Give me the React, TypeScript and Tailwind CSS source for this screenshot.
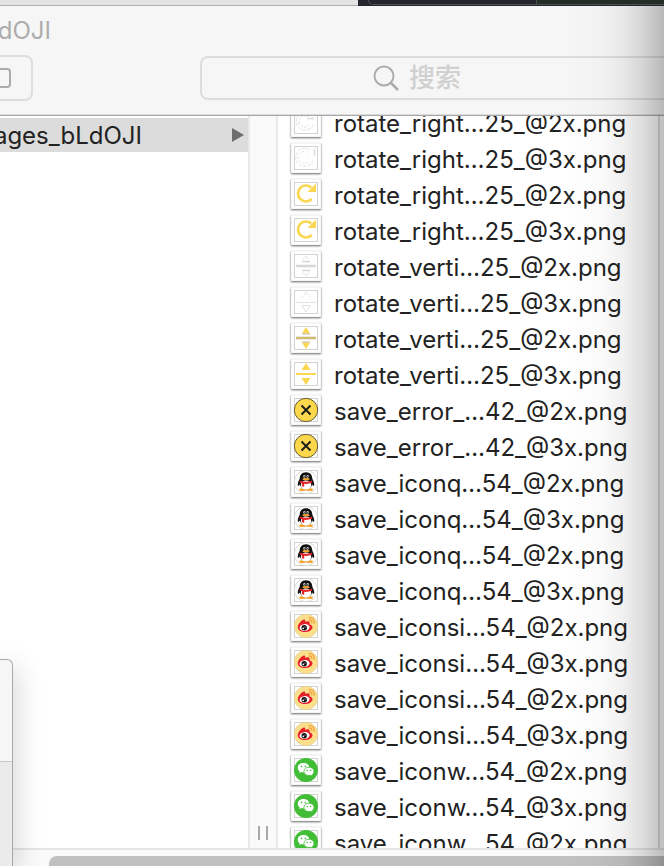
import React from "react";

type Kind =
  | "rotateFaint"
  | "rotateDots"
  | "rotate"
  | "flipGray"
  | "flipFaint"
  | "flipShaded"
  | "flip"
  | "error"
  | "qq"
  | "weibo"
  | "wechat";

const files: { name: string; kind: Kind }[] = [
  { name: "rotate_right…25_@2x.png", kind: "rotateFaint" },
  { name: "rotate_right…25_@3x.png", kind: "rotateDots" },
  { name: "rotate_right…25_@2x.png", kind: "rotate" },
  { name: "rotate_right…25_@3x.png", kind: "rotate" },
  { name: "rotate_verti…25_@2x.png", kind: "flipGray" },
  { name: "rotate_verti…25_@3x.png", kind: "flipFaint" },
  { name: "rotate_verti…25_@2x.png", kind: "flipShaded" },
  { name: "rotate_verti…25_@3x.png", kind: "flip" },
  { name: "save_error_…42_@2x.png", kind: "error" },
  { name: "save_error_…42_@3x.png", kind: "error" },
  { name: "save_iconq…54_@2x.png", kind: "qq" },
  { name: "save_iconq…54_@3x.png", kind: "qq" },
  { name: "save_iconq…54_@2x.png", kind: "qq" },
  { name: "save_iconq…54_@3x.png", kind: "qq" },
  { name: "save_iconsi…54_@2x.png", kind: "weibo" },
  { name: "save_iconsi…54_@3x.png", kind: "weibo" },
  { name: "save_iconsi…54_@2x.png", kind: "weibo" },
  { name: "save_iconsi…54_@3x.png", kind: "weibo" },
  { name: "save_iconw…54_@2x.png", kind: "wechat" },
  { name: "save_iconw…54_@3x.png", kind: "wechat" },
  { name: "save_iconw…54_@2x.png", kind: "wechat" },
];

function Glyph({ kind }: { kind: Kind }) {
  switch (kind) {
    case "rotateFaint":
      return (
        <g fill="none" stroke="#e2e2e2">
          <path d="M19 7A8.800 8.800 0 1 0 22 18" strokeDasharray="4 1" />
          <path d="M17 9.500A5.800 5.800 0 1 0 18 18.500" strokeDasharray="3 1" />
          <path d="M16 11.500h7" strokeWidth="2" />
        </g>
      );
    case "rotateDots":
      return (
        <g fill="none" stroke="#e2e2e2">
          <path d="M18.500 6.500A9 9 0 1 0 22 18" strokeDasharray="3 1.500" />
          <path d="M17 9.500A6 6 0 1 0 18 18.500" strokeDasharray="2 2" />
          <path d="M23.500 5.500v7" strokeWidth="2" />
        </g>
      );
    case "rotate":
      return (
        <g>
          <path d="M20.300 8.500A8 8 0 1 0 20.800 20" fill="none" stroke="#fbd650" strokeWidth="2.700" />
          <path d="M16.500 13h8.500v-8.500z" fill="#fbd650" />
        </g>
      );
    case "flipGray":
      return (
        <g fill="none" stroke="#d6d6d6">
          <path d="M5 15h20" strokeWidth="2.500" />
          <path d="M11 10.500h8M11 19.500h8" strokeWidth="1.500" />
          <path d="M12 8.500l3-3.500 3 3.500M12 21.500l3 3.500 3-3.500" strokeDasharray="2 1" />
        </g>
      );
    case "flipFaint":
      return (
        <g fill="none" stroke="#e0e0e0">
          <path d="M5 14.500q0 1 1 1h18q1 0 1-1" />
          <path d="M11 10.500l4-5.500 4 5.500" strokeDasharray="2 1" />
          <path d="M11 18.500h8l-4 6.500z" />
        </g>
      );
    case "flipShaded":
      return (
        <g>
          <path d="M15 4l4 6.500h-8zM15 26l4-6.500h-8z" fill="#fbd650" />
          <path d="M11 11h8M11 19h8" stroke="#b9b5a8" />
          <path d="M5 15h20" stroke="#bdb089" strokeWidth="2.600" />
          <path d="M5 15h20" stroke="#e6c654" strokeWidth="1" />
        </g>
      );
    case "flip":
      return (
        <g fill="#fbd650">
          <path d="M15 4l4.500 7h-9zM15 26l4.500-7h-9zM5 14h20v2H5z" />
        </g>
      );
    case "error":
      return (
        <g>
          <circle cx="15" cy="15" r="11.700" fill="#fcd64d" stroke="#55502f" strokeWidth=".9" />
          <path d="M10.500 10.500l9 9M19.500 10.500l-9 9" stroke="#191919" strokeWidth="1.800" />
        </g>
      );
    case "qq":
      return (
        <g>
          <circle cx="15" cy="15" r="11.700" fill="#fff" stroke="#ccc" strokeWidth=".7" />
          <ellipse cx="11.500" cy="22.700" rx="3.500" ry="1.400" fill="#f3a52c" />
          <ellipse cx="18.500" cy="22.700" rx="3.500" ry="1.400" fill="#f3a52c" />
          <path d="M15 5.300c-4.200 0-6.300 2.900-6.300 6.400-1 1.900-2.300 4.700-1.900 6.700.5 1 1.500-.2 2-1 .8 3.200 3.200 4.800 6.200 4.800s5.400-1.600 6.200-4.800c.5.800 1.500 2 2 1 .4-2-.9-4.800-1.900-6.700 0-3.500-2.100-6.400-6.300-6.400z" fill="#111" />
          <ellipse cx="15" cy="18" rx="5.200" ry="4.600" fill="#fff" />
          <ellipse cx="13.400" cy="9.400" rx="1.100" ry="1.400" fill="#d8d8d8" />
          <ellipse cx="16.600" cy="9.400" rx="1.100" ry="1.400" fill="#d8d8d8" />
          <circle cx="13.700" cy="9.600" r=".5" fill="#111" />
          <circle cx="16.300" cy="9.600" r=".5" fill="#111" />
          <ellipse cx="15" cy="12.200" rx="3.500" ry="1.100" fill="#f3a52c" />
          <path d="M8.800 13.500q6.200 2.400 12.400 0v2q-4 1.700-8 1.300v2.900l-2.300-.4.100-3-2.200-.8z" fill="#e32126" />
        </g>
      );
    case "weibo":
      return (
        <g>
          <circle cx="15" cy="15" r="11.700" fill="#fbdf8b" stroke="#dcc98f" strokeWidth=".6" />
          <path d="M13 8.500c1.500-.2 1.400 1.200 1.100 2.300 2-.9 4.900-1.200 4.600 1.500 0 .5-.3.900.3 1.100 1.400.4 2.500 1.200 2.500 2.800 0 3-4 4.900-7.700 4.900-4 0-7-1.800-7-4.800 0-3.100 3.700-7.400 6.200-7.800z" fill="#e6202b" />
          <ellipse cx="13.600" cy="16.500" rx="5" ry="3.400" fill="#fff" transform="rotate(-8 13.600 16.500)" />
          <circle cx="13.200" cy="16.700" r="2.700" fill="#111" />
          <circle cx="12.300" cy="17.300" r=".9" fill="#fff" />
          <circle cx="14" cy="16" r=".5" fill="#fff" />
          <path d="M18 6.700c3.600-.5 6 2.500 5 5.800M18.400 9c1.800-.2 2.900 1.200 2.400 2.900" fill="none" stroke="#f5a142" strokeWidth="1.300" strokeLinecap="round" />
        </g>
      );
    default:
      return (
        <g>
          <circle cx="15" cy="15" r="12" fill="#42be36" />
          <path d="M12.500 8c-3.300 0-5.800 2-5.800 4.700 0 1.500.8 2.800 2.100 3.700l-.6 1.800 2.200-1.100c.7.200 1.400.3 2.100.3 3.200 0 5.800-2.100 5.800-4.700S15.700 8 12.500 8z" fill="#fff" />
          <path d="M18 12.200c-2.900 0-5.100 1.900-5.100 4.200s2.200 4.200 5.100 4.200c.6 0 1.200-.1 1.700-.3l1.900 1-.5-1.600c1.200-.8 1.900-1.900 1.900-3.300 0-2.300-2.200-4.200-5-4.200z" fill="#fff" stroke="#42be36" strokeWidth=".8" />
          <circle cx="10.500" cy="11.400" r=".8" fill="#42be36" />
          <circle cx="14.400" cy="11.400" r=".8" fill="#42be36" />
          <circle cx="16.300" cy="15.500" r=".7" fill="#42be36" />
          <circle cx="19.600" cy="15.500" r=".7" fill="#42be36" />
        </g>
      );
  }
}

function Thumb({ kind }: { kind: Kind }) {
  return (
    <svg
      viewBox="0 0 30 30"
      className="size-[30px] shrink-0 bg-white shadow-[inset_0_0_1px_rgba(0,0,0,0.35),0_1px_2px_rgba(0,0,0,0.6)]"
      aria-hidden="true"
    >
      <rect x="3.500" y="3.500" width="23" height="23" fill="none" stroke="#d2d2d2" strokeWidth="1" />
      <Glyph kind={kind} />
    </svg>
  );
}

export default function App() {
  return (
    <div className="relative flex h-screen flex-col overflow-hidden bg-white font-['Inter','Noto_Sans_CJK_SC',sans-serif] text-[24px] leading-[36px] text-[#222222]">
      <div className="flex h-[6px] shrink-0">
        <div className="w-[358px] shrink-0 border-b border-[#adadad] bg-[#e3e3e3]" />
        <div className="flex flex-1 bg-[#24262d] pl-[10px]">
          <div className="h-[5px] w-[168px] rounded-bl-md border-b border-l border-[#50535a]" />
          <div className="h-[5px] flex-1 border-b border-l border-[#4b524e] bg-[#252d29]" />
        </div>
      </div>

      <header className="h-[110px] shrink-0 border-b border-[#a8a8a8] bg-[#f6f6f6] shadow-[inset_0_-1px_0_#dcdcdc]">
        <div className="flex h-[49px] w-[51px] items-center justify-end">
          <h1 className="text-[#acacac]">dOJI</h1>
        </div>
        <div className="flex items-center justify-between">
          <button
            type="button"
            aria-label="View"
            className="flex h-[46px] w-[33px] items-center rounded-r-lg border-2 border-l-0 border-[#dddddd]"
          >
            <span className="h-[20px] w-[11px] rounded-r border-2 border-l-0 border-[#acacac]" />
          </button>
          <label className="ml-[167px] flex h-[44px] flex-1 items-center gap-[10px] rounded-l-lg border-2 border-r-0 border-[#dddddd] pl-[171px]">
            <svg viewBox="0 0 26 26" className="size-[26px] shrink-0" fill="none" stroke="#acacac" strokeWidth="2" aria-hidden="true">
              <circle cx="11" cy="11" r="9.500" />
              <path d="M18 18l7 7" strokeWidth="2.500" />
            </svg>
            <input
              type="text"
              placeholder="搜索"
              aria-label="搜索"
              className="w-full min-w-0 bg-transparent text-[26px] font-medium outline-none placeholder:text-[#d0d0d0]"
            />
          </label>
        </div>
      </header>

      <main className="flex min-h-0 flex-1">
        <nav className="w-[248px] shrink-0 pt-[2px]">
          <button type="button" className="flex h-[34px] w-full items-center justify-between bg-[#dcdcdc] pr-[4px]">
            <span className="flex w-[142px] justify-end pt-[2px]">ages_bLdOJI</span>
            <svg viewBox="0 0 12 14" className="h-[14px] w-[12px]" fill="#6e6e6e" aria-hidden="true">
              <path d="M0 0l12 7-12 7z" />
            </svg>
          </button>
        </nav>
        <div className="flex w-[30px] shrink-0 items-end justify-center gap-[6px] border-x-2 border-[#e9e9e9] bg-[#fafafa] pb-[8px]">
          <span className="h-[14px] w-[2px] bg-[#a8a8a8]" />
          <span className="h-[14px] w-[2px] bg-[#a8a8a8]" />
        </div>
        <div className="mr-[4px] min-w-0 flex-1 overflow-hidden border-r-2 border-[#dddddd] pl-[13px]">
          <ul className="-mt-[12px]">
            {files.map((file, i) => (
              <li key={i} className="flex h-[36px] items-center gap-[13px] whitespace-nowrap">
                <Thumb kind={file.kind} />
                <span className="pt-[4px]">{file.name}</span>
              </li>
            ))}
          </ul>
        </div>
      </main>

      <footer className="h-[18px] shrink-0 border-t-2 border-[#e5e5e5] bg-[#fafafa] pt-[6px] pl-[49px]">
        <div className="h-[10px] rounded-tl-lg bg-[#c1c1c1]" />
      </footer>

      <div className="absolute bottom-0 left-0 flex h-[207px] w-[13px] flex-col rounded-tr-md border-t border-r border-[#a8a8a8] bg-[#ebebeb] shadow-[0_8px_28px_rgba(0,0,0,0.28)]">
        <div className="h-[102px] rounded-tr-md border-b border-[#c8c8c8] bg-[#f6f6f6]" />
      </div>

      <div className="pointer-events-none absolute top-[6px] right-0 bottom-0 w-[100px] bg-[linear-gradient(to_right,rgba(0,0,0,0)_0%,rgba(0,0,0,0.02)_38%,rgba(0,0,0,0.06)_60%,rgba(0,0,0,0.14)_80%,rgba(0,0,0,0.25)_100%)]" />
    </div>
  );
}
